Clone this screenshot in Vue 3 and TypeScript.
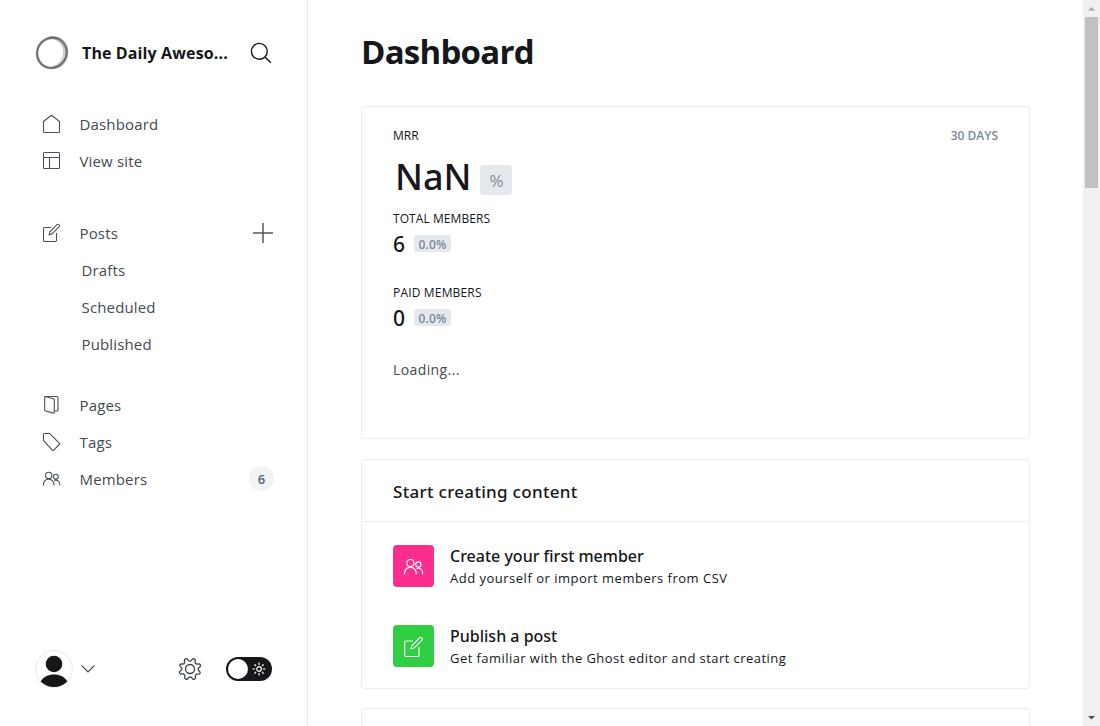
<script setup lang="ts">
interface NavItem {
  label: string
  icon?: string
  action?: boolean
  count?: number
}

const groups: NavItem[][] = [
  [
    { label: 'Dashboard', icon: 'home' },
    { label: 'View site', icon: 'site' },
  ],
  [
    { label: 'Posts', icon: 'edit', action: true },
    { label: 'Drafts' },
    { label: 'Scheduled' },
    { label: 'Published' },
  ],
  [
    { label: 'Pages', icon: 'pages' },
    { label: 'Tags', icon: 'tag' },
    { label: 'Members', icon: 'members', count: 6 },
  ],
]

const icons: Record<string, string> = {
  home: 'M1.500 7.500 9.500 1.200 17.500 7.500v10a1 1 0 0 1-1 1h-14a1 1 0 0 1-1-1z',
  site: 'M2.500 1.500h14a1 1 0 0 1 1 1v14a1 1 0 0 1-1 1h-14a1 1 0 0 1-1-1v-14a1 1 0 0 1 1-1zM1.500 6.500h16M7.500 6.500v11',
  edit: 'M9 4.500H2.800a1.300 1.300 0 0 0-1.300 1.300v11.400a1.300 1.300 0 0 0 1.300 1.300h10.400a1.300 1.300 0 0 0 1.300-1.300V10M7.900 8.900l7.100-7.200a1.400 1.400 0 0 1 2 0l.1.1a1.400 1.400 0 0 1 0 2L10 10.900l-3 .9z',
  pages: 'M3.500 1.500h11.500a1 1 0 0 1 1 1v12.500a1 1 0 0 1-1 1h-2.500M3 1.500l8.400 2.200a1.200 1.200 0 0 1 .9 1.200v12.400a.8.800 0 0 1-1 .8l-7.800-2.100a1 1 0 0 1-.8-1V2a.5.500 0 0 1 .3-.5z',
  tag: 'M1.500 2.500a1 1 0 0 1 1-1h4.800a1 1 0 0 1 .7.300l9.300 9.300a1 1 0 0 1 0 1.400l-5.600 5.700a1 1 0 0 1-1.400 0L1.800 8.900a1 1 0 0 1-.3-.7z',
  members: 'M6.700 3.200a3.200 3.200 0 1 1 0 6.400 3.200 3.200 0 0 1 0-6.400zM1.500 16.500v-1.200a5.200 5.200 0 0 1 10.400 0v1.200M13.900 5.300a2.400 2.400 0 1 1 0 4.800 2.400 2.400 0 0 1 0-4.800zM12.300 11.500c3-1.200 5.500.8 5.500 4v1',
}

const totals = [
  { label: 'Total members', value: '6', change: '0.0%', cls: 'total' },
  { label: 'Paid members', value: '0', change: '0.0%', cls: 'paid' },
]

const tasks = [
  { title: 'Create your first member', text: 'Add yourself or import members from CSV', icon: 'members', cls: 'pink' },
  { title: 'Publish a post', text: 'Get familiar with the Ghost editor and start creating', icon: 'edit', cls: 'green' },
]
</script>

<template>
  <div class="app">
    <aside class="sidebar">
      <header class="brand">
        <svg class="logo" viewBox="0 0 36 36" width="36" height="36">
          <g fill="none" stroke="#444">
            <circle cx="18" cy="18" r="15" stroke-width="2.600" opacity=".4" />
            <ellipse cx="18.300" cy="17.800" rx="16" ry="14.200" stroke-width="1.800" opacity=".4" transform="rotate(-45 18 18)" />
            <ellipse cx="17.800" cy="17.800" rx="14.400" ry="15.600" stroke-width="1.400" opacity=".45" transform="rotate(10 18 18)" />
            <path d="M15 2.800c9-1.500 16 7 15.600 15.200S25 30.500 19 32.500" stroke-width="3" opacity=".25" />
          </g>
        </svg>
        <span class="brand-name">The Daily Aweso...</span>
        <svg class="search" viewBox="0 0 22 22" width="22" height="22">
          <circle cx="9.300" cy="9.300" r="7.900" /><path d="m15 15 5.800 5.800" />
        </svg>
      </header>
      <nav>
        <ul v-for="(group, g) in groups" :key="g">
          <li v-for="item in group" :key="item.label" :class="{ sub: !item.icon }">
            <svg v-if="item.icon" class="icon" viewBox="0 0 19 19" width="19" height="19"><path :d="icons[item.icon]" /></svg>
            <span class="label">{{ item.label }}</span>
            <svg v-if="item.action" class="plus" viewBox="0 0 20 20" width="20" height="20"><path d="M10 0v20M0 10h20" /></svg>
            <span v-if="item.count" class="count">{{ item.count }}</span>
          </li>
        </ul>
      </nav>
      <footer class="tools">
        <svg class="avatar" viewBox="0 0 38 38" width="38" height="38">
          <circle cx="19" cy="19" r="18.400" fill="#fff" stroke="#e5e8eb" />
          <circle cx="19" cy="14" r="8.300" fill="#15171a" />
          <path d="M5.700 31.500C8.200 27 13 24.600 19 24.600S29.800 27 32.300 31.500C29 35 24.500 37 19 37S9 35 5.700 31.500z" fill="#15171a" />
        </svg>
        <svg class="chevron" viewBox="0 0 14 8" width="14" height="8"><path d="m.7.700 6.300 6.200L13.300.7" /></svg>
        <svg class="gear" viewBox="0 0 24 24" width="24" height="24">
          <circle cx="12" cy="12" r="4.500" />
          <path transform="rotate(22.500 12 12)" d="M10.300 2.400a1.750 1.750 0 0 1 3.400 0l.3 1.100a2 2 0 0 0 2.900 1.200l1-.6a1.750 1.750 0 0 1 2.400 2.400l-.6 1a2 2 0 0 0 1.200 2.800l.9.200a1.600 1.600 0 0 1 0 3l-.9.300a2 2 0 0 0-1.200 2.800l.6 1a1.750 1.750 0 0 1-2.400 2.400l-1-.6a2 2 0 0 0-2.900 1.200l-.3 1a1.750 1.750 0 0 1-3.400 0l-.3-1a2 2 0 0 0-2.900-1.200l-1 .6a1.750 1.750 0 0 1-2.400-2.400l.6-1a2 2 0 0 0-1.200-2.800l-.9-.3a1.600 1.600 0 0 1 0-3l.9-.2a2 2 0 0 0 1.200-2.800l-.6-1a1.750 1.750 0 0 1 2.400-2.400l1 .6a2 2 0 0 0 2.900-1.200z" />
        </svg>
        <div class="toggle">
          <i></i>
          <svg viewBox="0 0 14 14" width="14" height="14"><circle cx="7" cy="7" r="2.300" /><path d="M7 .5v2.500M7 11v2.500M.5 7h2.500M11 7h2.500M2.400 2.400l1.600 1.600M10 10l1.600 1.600M2.400 11.600l1.600-1.600M10 4l1.600-1.600" /></svg>
        </div>
      </footer>
    </aside>

    <main>
      <h1>Dashboard</h1>
      <section class="card stats">
        <div class="mrr-head"><span class="caption">MRR</span><span class="caption days">30 days</span></div>
        <div class="mrr-value"><span class="nan">NaN</span><span class="percent">%</span></div>
        <div v-for="t in totals" :key="t.label" class="total-block">
          <div class="caption" :class="t.cls">{{ t.label }}</div>
          <div class="figure"><span class="num">{{ t.value }}</span><span class="change">{{ t.change }}</span></div>
        </div>
        <p class="loading">Loading...</p>
      </section>
      <section class="card start">
        <h2>Start creating content</h2>
        <div v-for="t in tasks" :key="t.title" class="task" :class="t.cls">
          <div class="tile"><svg viewBox="0 0 19 19" width="21" height="21"><path :d="icons[t.icon]" /></svg></div>
          <div class="task-body"><h3>{{ t.title }}</h3><p>{{ t.text }}</p></div>
        </div>
      </section>
      <section class="card next"></section>
    </main>

    <div class="scrollbar">
      <svg viewBox="0 0 17 17" width="17" height="17"><path d="M5 10.500 8.500 7l3.500 3.500z" fill="#a3a3a3" /></svg>
      <div class="thumb"></div>
      <svg viewBox="0 0 17 17" width="17" height="17"><path d="M5 7l3.500 3.500L12 7z" fill="#505050" /></svg>
    </div>
  </div>
</template>

<style>
body { margin: 0; overflow: hidden; }
</style>

<style scoped>
* { box-sizing: border-box; }
.app { display: flex; width: 1100px; height: 726px; overflow: hidden; background: #fff; color: #15171a; font-family: "Open Sans", "Noto Sans", sans-serif; }
svg { display: block; flex: none; }
h1, h2, h3, p, ul { margin: 0; padding: 0; }
span, h3, p { white-space: nowrap; }
.sidebar { width: 308px; flex: none; display: flex; flex-direction: column; border-right: 1px solid #e6e9eb; }
.brand { height: 105px; padding: 0 35px 0 34px; display: flex; align-items: center; }
.brand-name { margin-left: 12px; width: 169px; font-size: 16px; font-weight: 700; letter-spacing: .12px; }
.search { fill: none; stroke: #15171a; stroke-width: 1.400; }
nav { flex: 1; }
ul { list-style: none; margin-bottom: 35px; }
ul + ul { margin-bottom: 24px; }
li { height: 37px; padding: 0 34px 0 42px; display: flex; align-items: center; color: #394047; }
li.sub { padding-left: 82px; }
.label { margin-left: -.5px; font-size: 15px; letter-spacing: .15px; color: #444b52; }
.icon { margin-right: 19px; fill: none; stroke: #4a5158; stroke-width: 1.100; stroke-linejoin: round; }
.plus { margin: 0 0 0 auto; fill: none; stroke: #54595f; stroke-width: 1.500; }
.count { margin: 0 -1px 0 auto; width: 25px; height: 25px; border-radius: 50%; background: #f1f3f4; display: flex; align-items: center; justify-content: center; font-size: 13px; font-weight: 600; color: #5d6670; }
.tools { height: 76px; padding: 0 35px 0 35px; display: flex; align-items: flex-start; }
.chevron { margin: 15px 0 0 8px; fill: none; stroke: #394047; stroke-width: 1.100; }
.gear { margin: 7px 0 0 83px; fill: none; stroke: #394047; stroke-width: 1.300; }
.toggle { margin: 7px 0 0 24px; width: 46px; height: 24px; border-radius: 12px; background: #15171a; display: flex; align-items: center; padding: 0 6.500px 0 2px; justify-content: space-between; }
.toggle i { width: 20px; height: 20px; border-radius: 50%; background: #fff; }
.toggle svg { fill: none; stroke: #fff; stroke-width: 1.200; }
main { flex: 1; padding: 0 53px; overflow: hidden; }
h1 { height: 106px; padding-bottom: 3px; display: flex; align-items: center; font-size: 33px; line-height: 1; font-weight: 700; letter-spacing: -.75px; }
.card { width: 669px; border: 1px solid #ebeef0; border-radius: 3px; padding: 0 31px; }
.stats { height: 333px; margin-bottom: 20px; }
.mrr-head { padding-top: 20px; display: flex; justify-content: space-between; }
.caption { height: 18px; line-height: 18px; font-size: 12px; text-transform: uppercase; }
.total { letter-spacing: .08px; }
.paid { letter-spacing: .17px; }
.days { color: #7c8b9a; font-weight: 600; }
.mrr-value { height: 50px; margin: 7px 0 8px 2px; display: flex; align-items: center; }
.nan { font-family: "Noto Sans", sans-serif; font-size: 36px; line-height: 50px; font-weight: 500; }
.percent { width: 32px; height: 30px; margin: 5px 0 0 9px; padding-top: 2px; border-radius: 3px; background: #e5e9ed; display: flex; align-items: center; justify-content: center; font-size: 17px; color: #7c8b9a; }
.total-block { height: 74px; }
.figure { height: 32px; display: flex; align-items: center; }
.num { font-family: "Noto Sans", sans-serif; font-size: 21px; font-weight: 500; }
.change { width: 37px; height: 17px; margin: -1px 0 0 9px; border-radius: 3px; background: #e5e9ed; color: #7c8b9a; font-size: 12px; line-height: 19px; font-weight: 600; letter-spacing: .2px; text-align: center; }
.loading { margin-top: 2px; font-size: 14px; line-height: 20px; letter-spacing: .4px; color: #444b52; }
.start { height: 230px; margin-bottom: 19px; }
h2 { height: 62px; margin: 0 -31px; padding: 1px 31px 0; border-bottom: 1px solid #ebeef0; display: flex; align-items: center; font-family: "Noto Sans", sans-serif; font-size: 17px; font-weight: 500; letter-spacing: .3px; }
.task { display: flex; height: 80px; padding-top: 23px; }
.tile { width: 41px; height: 42px; border-radius: 4px; display: flex; align-items: center; justify-content: center; }
.tile svg { fill: none; stroke: #fff; stroke-width: 1; stroke-linejoin: round; }
.pink .tile { background: #fb2d8d; }
.green .tile { background: #30cf43; }
.task-body { margin-left: 16px; }
h3 { font-family: "Noto Sans", sans-serif; font-size: 16px; line-height: 22px; font-weight: 500; }
.task p { font-size: 13px; line-height: 22px; letter-spacing: .5px; }
.green p { letter-spacing: .44px; }
.next { height: 100px; }
.scrollbar { width: 17px; background: #f0f0f0; display: flex; flex-direction: column; }
.thumb { width: 13px; height: 171px; margin: 0 2px auto; background: #c1c1c1; }
</style>
